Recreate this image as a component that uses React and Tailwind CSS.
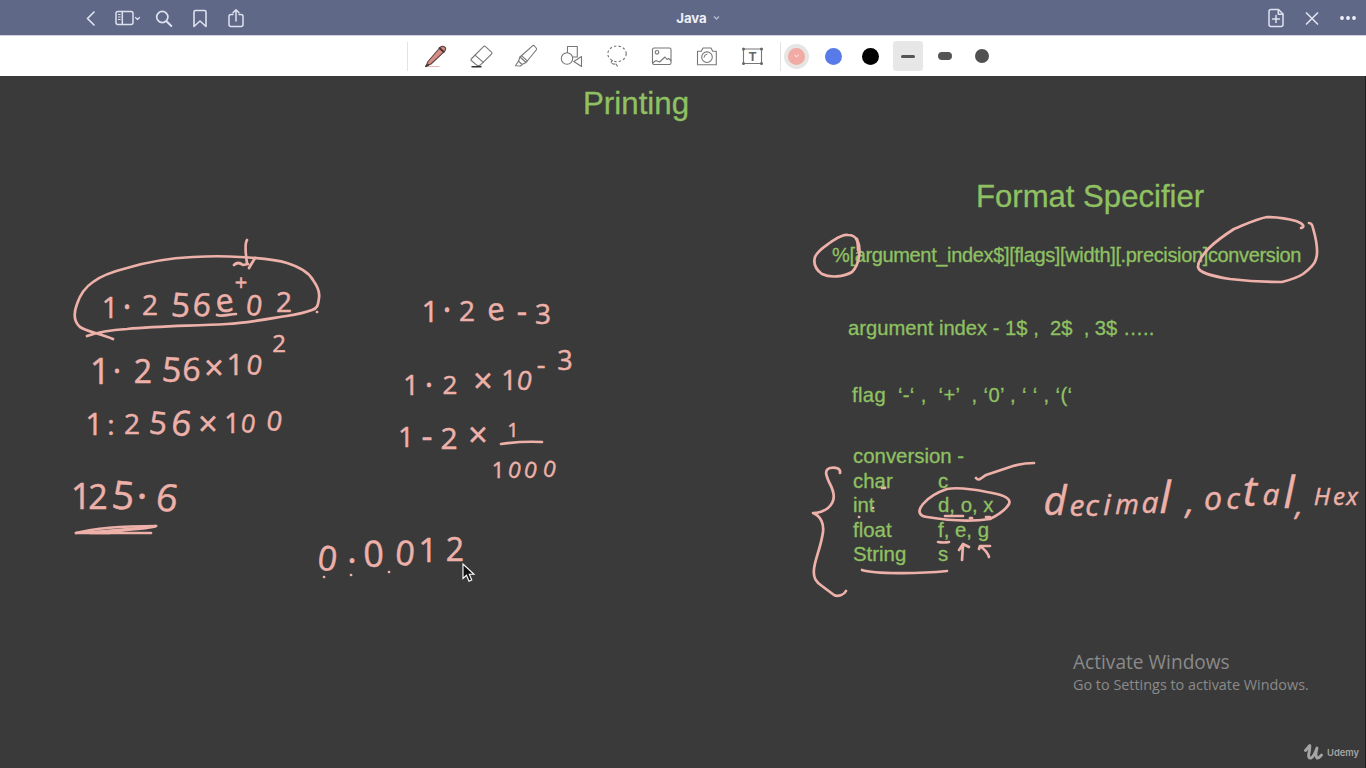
import React from "react";

const INK = "#edb1aa";

function Cell({ className = "", children }) {
  return <div className={"flex shrink-0 items-center justify-center " + className}>{children}</div>;
}

function Icon({ size = 26, children, className = "", sw = 1.1 }) {
  return (
    <svg
      width={size}
      height={size}
      viewBox={`0 0 ${size} ${size}`}
      fill="none"
      stroke="currentColor"
      strokeWidth={sw}
      strokeLinecap="round"
      strokeLinejoin="round"
      className={"shrink-0 " + className}
    >
      {children}
    </svg>
  );
}

function TitleBar() {
  return (
    <header className="flex h-9 shrink-0 items-center border-b border-[#cfd3e4] bg-[#5f6887] text-[#dde1ef]">
      <div className="flex w-[480px] items-center pl-[73px]">
        <Cell className="w-[36px]">
          <Icon sw={1.7}><path d="M16 7 L9.5 13.5 L16 20" /></Icon>
        </Cell>
        <Cell className="w-[37px]">
          <Icon sw={1.5}>
            <rect x="1" y="6.5" width="17" height="13" rx="2" />
            <path d="M7.3 6.5v13" />
            <path d="M3.4 9.5h1.8M3.4 12h1.8M3.4 14.5h1.8" strokeWidth="1" />
            <path d="M20.5 12.5l2 2 2-2" strokeWidth="1.2" />
          </Icon>
        </Cell>
        <Cell className="w-[36px]">
          <Icon sw={1.7}><circle cx="11.3" cy="12" r="5.6" /><path d="M15.5 16.2 L20.3 21" strokeWidth="2" /></Icon>
        </Cell>
        <Cell className="w-[36px]">
          <Icon sw={1.6}><path d="M7 7 Q7 5.5 8.5 5.5 H17.5 Q19 5.5 19 7 V21.5 L13 16 L7 21.5Z" /></Icon>
        </Cell>
        <Cell className="w-[36px]">
          <Icon sw={1.5}>
            <path d="M10 9.5H8Q6 9.5 6 11.5V19.5Q6 21.5 8 21.5H18Q20 21.5 20 19.5V11.5Q20 9.5 18 9.5H16" />
            <path d="M13 16V5M10 7.7l3-3 3 3" />
          </Icon>
        </Cell>
      </div>
      <div className="flex flex-1 items-center justify-center gap-[6px] pl-[30px] pt-[2px] font-['Inter',sans-serif] text-[13.2px] font-bold text-[#eef0f8]">
        <span>Java</span>
        <svg width="7" height="6" viewBox="0 0 7 6" fill="none" stroke="#b3b9d0" strokeWidth="1.4"><path d="M1 1.5l2.5 2.5L6 1.5" /></svg>
      </div>
      <div className="flex w-[480px] items-center justify-end">
        <Cell className="w-[36px]">
          <Icon sw={1.5}>
            <path d="M8 4.5H15.5L20 9V19.5Q20 21.5 18 21.5H8Q6 21.5 6 19.5V6.5Q6 4.5 8 4.5Z" />
            <path d="M15.3 4.8V9.2H19.8M13 10.5v7M9.5 14h7" />
          </Icon>
        </Cell>
        <Cell className="w-[36px]">
          <Icon sw={1.7}><path d="M7.5 8l11 11M18.5 8L7.5 19" /></Icon>
        </Cell>
        <Cell className="w-[36px]">
          <Icon className="text-[#f0f1f8]"><g fill="currentColor" stroke="none"><circle cx="7" cy="13" r="1.9" /><circle cx="13" cy="13" r="1.9" /><circle cx="19" cy="13" r="1.9" /></g></Icon>
        </Cell>
      </div>
    </header>
  );
}

function ToolBar() {
  const tool = "w-[45.3px]";
  return (
    <div className="flex h-10 shrink-0 items-center bg-white pl-[407px] text-[#777]">
      <div className="mr-[5px] h-[29px] w-px bg-[#e3e3e3]" />
      <Cell className={tool}>
        <Icon>
          <path d="M3 23.5H16" stroke="#e6b8b3" strokeWidth="1" />
          <path d="M3 23L5 18.5L17 4.5Q19.5 2.5 22 4.2Q23.5 6 21.5 8.3L8 21Z" fill="#d58d86" stroke="#5e4543" />
          <path d="M16.5 5L20.8 9M3 23.3l2.5-1.5" stroke="#4b3534" strokeWidth="1.8" />
        </Icon>
      </Cell>
      <Cell className={tool}>
        <Icon>
          <path d="M3.2 16L15.5 3.6Q16.5 2.6 17.5 3.6L23.5 9.2Q24.5 10.2 23.5 11.2L12 22.3Q10.5 23.3 9 22.3L3.3 17.5Q2.5 16.8 3.2 16Z" />
          <path d="M7 12.2L15.3 19.3" />
          <path d="M4 23.7H13" stroke="#333" strokeWidth="1.4" />
        </Icon>
      </Cell>
      <Cell className={tool}>
        <Icon>
          <path d="M7 14L19.5 2.8Q20.5 2 21.5 3L23.2 5Q24 6 23.2 7L13 19.5Z" />
          <path d="M7 14L5.5 18L9 21.5L13 19.5M5.5 18L2.5 22.8L7.5 23L9 21.5M8.5 12.6l5.8 5.3" />
        </Icon>
      </Cell>
      <Cell className={tool}>
        <Icon>
          <path d="M8.5 9.5V3.5H18.3V14H14.2" />
          <circle cx="8" cy="15.5" r="5.7" />
          <path d="M22.5 13.5V23.5L14.8 18.5Z" />
        </Icon>
      </Cell>
      <Cell className={tool}>
        <Icon>
          <ellipse cx="13" cy="10.8" rx="9.2" ry="7.8" strokeDasharray="2.4 2.2" strokeLinecap="butt" />
          <path d="M8.5 17.5q-2.5 2-.5 3t4 .5l2 3" strokeDasharray="2.5 1.4" />
        </Icon>
      </Cell>
      <Cell className={tool}>
        <Icon>
          <rect x="3.5" y="5" width="18.5" height="16.5" rx="1.5" />
          <circle cx="8" cy="9.3" r="1.8" />
          <path d="M4 20Q6.5 16.8 8 18L10.5 19L16 14L18 16.5L19.5 15.5L22 17.5" />
        </Icon>
      </Cell>
      <Cell className={tool}>
        <Icon>
          <path d="M3.5 8.2H7.3L9 5H17L18.7 8.2H22.3V21.8H3.5Z" />
          <circle cx="13" cy="14.2" r="5.3" />
          <path d="M10 14.3Q10 11.3 13 11.2" strokeWidth="1" />
        </Icon>
      </Cell>
      <Cell className={tool}>
        <Icon>
          <rect x="3.5" y="6" width="18" height="14.5" />
          <text x="12.5" y="18" textAnchor="middle" fontSize="12.5" fill="#666" stroke="none" fontWeight="700" className="font-['Liberation_Sans',sans-serif]">T</text>
          <g fill="#666" stroke="none"><circle cx="3.5" cy="6" r="1.5" /><circle cx="21.5" cy="6" r="1.5" /><circle cx="3.5" cy="20.5" r="1.5" /><circle cx="21.5" cy="20.5" r="1.5" /></g>
        </Icon>
      </Cell>
      <div className="ml-[5px] h-[29px] w-px bg-[#e3e3e3]" />
      <div className="-ml-[4px] flex items-center">
        <Cell className="w-[37.2px] pl-[1px]">
          <div className="flex size-[25px] items-center justify-center rounded-full bg-[#e6e4e4]">
            <div className="flex size-[17px] items-center justify-center rounded-full bg-[#f2aaa4]">
              <svg width="5" height="4" viewBox="0 0 5 4" fill="none" stroke="#fff"><path d="M.5 1l2 1.7 2-1.7" /></svg>
            </div>
          </div>
        </Cell>
        <Cell className="w-[37.2px]"><div className="size-[17px] rounded-full bg-[#597bea]" /></Cell>
        <Cell className="w-[37.2px]"><div className="size-[17px] rounded-full bg-black" /></Cell>
        <Cell className="w-[37.2px]">
          <div className="flex size-[30px] items-center justify-center rounded-[3px] bg-[#e7e7e7]">
            <div className="h-[3px] w-[14px] rounded-full bg-[#555]" />
          </div>
        </Cell>
        <Cell className="w-[37.2px]"><div className="h-[8px] w-[14px] rounded-full bg-[#555]" /></Cell>
        <Cell className="w-[37.2px]"><div className="size-[14px] rounded-full bg-[#505050]" /></Cell>
      </div>
    </div>
  );
}

/* One handwritten run: every mark is [character, centre x, baseline y, tilt, size?]. */
const RUNS = [
  { size: 28, marks: [["1", 110, 318, 0, 29], ["·", 127, 319, 0, 34], ["2", 150, 315, 0, 28], ["5", 180, 316, 4, 33], ["6", 201, 315, 6, 32], ["e", 226, 313, -8, 32], ["0", 253, 314, 8], ["2", 284, 312, 0, 28]] },
  { size: 22, marks: [["+", 241, 290, 0]] },
  { size: 32, marks: [["1", 100, 384, 0, 36], ["·", 117, 382, 0], ["2", 143, 383, 0], ["5", 171, 381, 4, 34], ["6", 191, 380, 4], ["×", 214, 380, 0, 34], ["1", 235, 375, 0, 30], ["0", 253, 373, 10, 27]] },
  { size: 21, marks: [["2", 279, 352, 0, 24]] },
  { size: 28, marks: [["1", 94, 435, 0, 31], [":", 111, 435, 0], ["2", 132, 434, 0], ["5", 157, 433, 6, 31], ["6", 180, 434, 8, 35], ["×", 208, 436, 0, 34], ["1", 232, 433, 0, 27], ["0", 247, 431, 10, 25], ["0", 273, 429, 10, 27]] },
  { size: 34, marks: [["1", 81, 509, 0, 36], ["2", 98, 509, 0], ["5", 122, 508, 6, 39], ["·", 142, 511, 0, 42], ["6", 165, 509, 10, 38]] },
  { size: 28, marks: [["1", 430, 322, 0, 30], ["·", 447, 322, 0, 34], ["2", 467, 321, 0], ["e", 497, 321, -6, 31], ["-", 522, 323, 0, 32], ["3", 543, 324, 0]] },
  { size: 28, marks: [["1", 411, 395, 0], ["·", 429, 396, 0, 32], ["2", 450, 394, 0, 26], ["×", 483, 393, 0, 34], ["1", 509, 390, 0, 27], ["0", 523, 388, 12, 26]] },
  { size: 27, marks: [["-", 541, 374, 0], ["3", 565, 370, 0]] },
  { size: 30, marks: [["1", 406, 447, 0, 28], ["-", 427, 448, 0, 34], ["2", 449, 449, 0], ["×", 478, 447, 0, 34]] },
  { size: 20, marks: [["1", 513, 437, 0]] },
  { size: 22, marks: [["1", 498, 478, 0], ["0", 513, 476, 14], ["0", 529, 476, 14], ["0", 548, 475, 14]] },
  { size: 34, marks: [["0", 326, 569, 8], [".", 352, 563, 0, 36], ["0", 374, 567, -2, 36], ["0", 404, 564, 6], ["1", 428, 562, 0, 33], ["2", 455, 561, 0, 32]] },
  { size: 30, italic: true, marks: [["d", 1055, 515, 0, 40], ["e", 1077, 516, 0], ["c", 1092, 516, 0], ["i", 1107, 515, 0], ["m", 1127, 514, 0, 27], ["a", 1150, 513, 0], ["l", 1165, 513, 0, 44], [",", 1190, 514, 0, 34]] },
  { size: 30, italic: true, marks: [["o", 1213, 510, 0, 32], ["c", 1233, 509, 0], ["t", 1250, 506, 0, 42], ["a", 1271, 505, 0], ["l", 1289, 508, 0, 44], [",", 1299, 515, 0]] },
  { size: 24, italic: true, marks: [["H", 1322, 505, 0], ["e", 1339, 505, 0], ["x", 1352, 505, 0]] },
];

const STROKES = [
  "M113 339C98 333 88 332 80 327C73 321 74 312 77 304C80 295 84 288 93 282C102 275 115 271 127 268C150 261 173 258 193 257C210 256 225 256 240 257C258 258 274 259 287 263C300 267 309 273 313 280C318 287 320 292 319 298C318 305 318 308 312 310C302 314 292 315 280 317C262 320 245 323 227 324C192 326 160 326 127 329C110 330 98 332 87 336",
  "M247 240C245 243 245 250 247 263M234 265Q238 261 243 265L248 264M249 268L255 258",
  "M217 315C223 317 229 314 236 314",
  "M76 533C95 528 130 526 156 526C150 530 110 530 90 533H151",
  "M76 533C95 532 125 530 156 526M76 533H110",
  "M501 444Q521 441 542 442",
  "M858 250C858 243 858 235 848 235C842 234 836 239 831 242C824 247 818 250 815 257C813 264 815 269 822 274C830 278 844 277 852 272C859 265 862 250 857 239",
  "M1301 228C1305 227 1304 224 1296 221C1286 218 1277 217 1267 217C1256 219 1244 225 1234 229C1223 236 1215 242 1208 249C1202 256 1198 261 1198 267C1199 273 1212 276 1230 279C1247 281 1264 282 1282 282C1290 280 1297 278 1303 274C1311 268 1315 264 1316 259C1319 250 1315 235 1313 228Q1312 223 1309 223",
  "M840 473C841 468 835 467 830 468C824 470 826 475 829 482C835 493 836 501 828 508C823 512 819 513 813 513C821 516 824 524 823 532C821 547 815 559 814 569C813 578 816 582 822 586L834 595C838 597 844 595 846 591",
  "M976 478C979 482 982 477 986 475L1013 466Q1024 463 1034 463",
  "M990 519C998 515 1005 511 1009 504C1012 497 999 494 987 492C972 489 958 487 947 489C935 493 928 498 923 504C917 511 919 516 927 517C945 520 969 522 990 519Z",
  "M945 516H963M938 542Q944 543 949 542M970 518h2M986 517h4",
  "M962 560L963 545M959 550L963 544L969 547",
  "M989 557Q987 551 981 547M979 549L980 546L990 546",
  "M862 570C874 574 918 574 947 571",
  "M882 488h3M873 508h.1M859 517h.1M255 314h.1M317 312h.1M324 577h.1M351 575h.1M389 572h.1",
];

function Ink() {
  return (
    <svg viewBox="0 76 1366 692" width="1366" height="692" className="absolute inset-0" fill="none">
      <g stroke={INK} strokeWidth="2.7" strokeLinecap="round" strokeLinejoin="round">
        {STROKES.map((d) => <path key={d} d={d} />)}
      </g>
      <g fill={INK} stroke={INK} strokeWidth="0.5" strokeLinejoin="round" textAnchor="middle" className="font-['Open_Sans',sans-serif]">
        {RUNS.map((run, i) => (
          <text key={i} fontSize={run.size} fontStyle={run.italic ? "italic" : "normal"}>
            {run.marks.map(([char, x, y, tilt, size], j) => (
              <tspan key={j} x={x} y={y} rotate={tilt} fontSize={size ?? run.size}>{char}</tspan>
            ))}
          </text>
        ))}
      </g>
    </svg>
  );
}

const CONVERSIONS = [["char", "c"], ["int", "d, o, x"], ["float", "f, e, g"], ["String", "s"]];

function Canvas() {
  return (
    <main className="relative flex-1 overflow-hidden whitespace-pre bg-[#3a3a3a] font-['Liberation_Sans',Arial,sans-serif] text-[#8fc162] [-webkit-text-stroke:0.3px_#8fc162]">
      <h1 className="absolute left-[583px] top-[10px] text-[31.3px] leading-9">Printing</h1>
      <h2 className="absolute left-[976px] top-[103px] text-[31.1px] leading-9">Format Specifier</h2>
      <p className="absolute left-[832px] top-[167px] text-[20px] leading-6 tracking-[-0.35px]">%[argument_index$][flags][width][.precision]conversion</p>
      <p className="absolute left-[848px] top-[240px] text-[20.2px] leading-6">argument index - 1$ ,  2$  , 3$ …..</p>
      <p className="absolute left-[852px] top-[307px] text-[20.2px] leading-6 tracking-[0.36px]">flag  ‘-‘ ,  ‘+’  , ‘0’ , ‘ ‘ , ‘(‘</p>
      <div className="absolute left-[853px] top-[368px] text-[20.4px] leading-[24.5px]">
        <p>conversion -</p>
        {CONVERSIONS.map(([name, codes]) => (
          <div key={name} className="flex"><span className="w-[85px]">{name}</span><span>{codes}</span></div>
        ))}
      </div>
      <div className="[-webkit-text-stroke:0]">
        <Ink />
      </div>
      <svg width="14" height="20" viewBox="0 0 14 20" className="absolute left-[462px] top-[487px]">
        <path d="M1 1V15.5L4.5 12.3L7 18.3L9.8 17L7.3 11.3H12Z" fill="#111" stroke="#fff" strokeWidth="1.1" />
      </svg>
      <div className="absolute left-[1073px] top-[574px] font-['Open_Sans',sans-serif] text-[#8a8a8a] [-webkit-text-stroke:0]">
        <p className="text-[19.1px] leading-6">Activate Windows</p>
        <p className="text-[14.4px] leading-[22px]">Go to Settings to activate Windows.</p>
      </div>
      <div className="absolute left-[1304px] top-[667px] flex items-center gap-[4px] text-[#a5a5a5] [-webkit-text-stroke:0]">
        <svg width="19" height="18" viewBox="0 0 19 18" fill="none" stroke="currentColor" strokeLinecap="round" strokeLinejoin="round">
          <path d="M1.5 7.5Q4.5 4 5.8 2.5Q6 6 4.8 11Q4 15.5 7 15Q10 13.5 13 5Q11 13 13 15Q14.5 15.5 17.5 12" strokeWidth="2.9" />
        </svg>
        <span className="pt-[2px] font-['Inter',sans-serif] text-[9.4px] font-semibold leading-4">Udemy</span>
      </div>
      <div className="absolute inset-y-0 right-0 w-px bg-[#1c1c1c]" />
    </main>
  );
}

export default function App() {
  return (
    <div className="flex h-[768px] w-[1366px] flex-col overflow-hidden">
      <TitleBar />
      <ToolBar />
      <Canvas />
    </div>
  );
}
